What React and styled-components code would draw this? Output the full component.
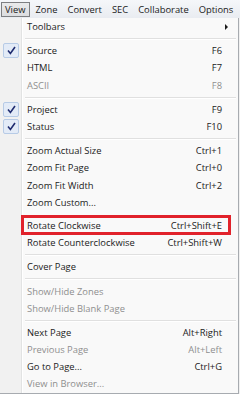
import React from 'react';
import styled, { createGlobalStyle } from 'styled-components';

const GlobalStyle = createGlobalStyle`
  html, body {
    margin: 0;
    padding: 0;
    background: #ffffff;
  }
  body {
    font-family: "Open Sans", "Noto Sans", sans-serif;
    font-size: 9.4px;
    color: #1b1b1b;
    width: 240px;
    height: 394px;
    overflow: hidden;
  }
`;

const menuTitles = ['View', 'Zone', 'Convert', 'SEC', 'Collaborate', 'Options'];

// one entry per menu row; sep marks a divider line
const items = [
  { label: 'Toolbars', submenu: true },
  { sep: true },
  { label: 'Source', shortcut: 'F6', checked: true },
  { label: 'HTML', shortcut: 'F7' },
  { label: 'ASCII', shortcut: 'F8', disabled: true },
  { sep: true },
  { label: 'Project', shortcut: 'F9', checked: true },
  { label: 'Status', shortcut: 'F10', checked: true },
  { sep: true },
  { label: 'Zoom Actual Size', shortcut: 'Ctrl+1' },
  { label: 'Zoom Fit Page', shortcut: 'Ctrl+0' },
  { label: 'Zoom Fit Width', shortcut: 'Ctrl+2' },
  { label: 'Zoom Custom...' },
  { label: 'Rotate Clockwise', shortcut: 'Ctrl+Shift+E', marked: true },
  { label: 'Rotate Counterclockwise', shortcut: 'Ctrl+Shift+W' },
  { sep: true },
  { label: 'Cover Page' },
  { sep: true },
  { label: 'Show/Hide Zones', disabled: true },
  { label: 'Show/Hide Blank Page', disabled: true },
  { sep: true },
  { label: 'Next Page', shortcut: 'Alt+Right' },
  { label: 'Previous Page', shortcut: 'Alt+Left', disabled: true },
  { label: 'Go to Page...', shortcut: 'Ctrl+G' },
  { label: 'View in Browser...', disabled: true },
];

const CheckIcon = () => (
  <svg width="9" height="9" viewBox="0 0 9 9">
    <path d="M1 4.6 L3.4 7.4 L8 1" fill="none" stroke="#1f2c70" strokeWidth="1.6" />
  </svg>
);

export default function App() {
  return (
    <>
      <GlobalStyle />
      <Page>
        <MenuBar>
          {menuTitles.map((t, i) => (
            <MenuTitle key={t} $open={i === 0}>{t}</MenuTitle>
          ))}
        </MenuBar>
        <Dropdown>
          {items.map((it, i) =>
            it.sep ? (
              <Separator key={i} />
            ) : (
              <Item key={i} $disabled={it.disabled} $marked={it.marked}>
                <Gutter>
                  {it.checked && (
                    <CheckBox>
                      <CheckIcon />
                    </CheckBox>
                  )}
                </Gutter>
                <Label>{it.label}</Label>
                {it.shortcut && <Shortcut>{it.shortcut}</Shortcut>}
                {it.submenu && <Arrow />}
              </Item>
            )
          )}
        </Dropdown>
      </Page>
    </>
  );
}

const Page = styled.div`
  width: 240px;
  height: 394px;
  display: flex;
  flex-direction: column;
  background: #f0f0f0;
`;

const MenuBar = styled.div`
  height: 18px;
  display: flex;
  align-items: center;
  background: linear-gradient(#f5f7fa, #e9ecf1);
  box-sizing: border-box;
  padding-left: 1px;
  white-space: nowrap;
  overflow: hidden;
`;

const MenuTitle = styled.div`
  height: 15px;
  line-height: 13px;
  padding: 0 3px;
  margin-right: 2px;
  box-sizing: border-box;
  border: 1px solid ${(p) => (p.$open ? '#7d7f82' : 'transparent')};
  background: ${(p) => (p.$open ? 'linear-gradient(#e9eaeb, #dcdddf)' : 'transparent')};
  color: #1b1b1b;
  font-size: 9.4px;
`;

const Dropdown = styled.div`
  flex: 1;
  width: 239px;
  box-sizing: border-box;
  border-right: 1px solid #a7abb0;
  border-bottom: 1px solid #a7abb0;
  background: linear-gradient(to right, #f1f1f1 0, #f1f1f1 21px, #e2e3e3 21px, #e2e3e3 22px, #ffffff 22px, #ffffff 23px, #f9f9f9 23px);
  display: flex;
  flex-direction: column;
`;

const Item = styled.div`
  position: relative;
  height: 17.2px;
  flex-shrink: 0;
  display: flex;
  align-items: center;
  padding-right: 16px;
  color: ${(p) => (p.$disabled ? '#8f8f8f' : '#1b1b1b')};
  margin-top: ${(p) => (p.$marked ? '6px' : '0')};
  &::after {
    content: '';
    display: ${(p) => (p.$marked ? 'block' : 'none')};
    position: absolute;
    left: 21px;
    right: 7px;
    top: -2px;
    bottom: -1px;
    border: 3px solid #e1222b;
  }
`;

const Gutter = styled.div`
  width: 27px;
  flex-shrink: 0;
  display: flex;
  align-items: center;
  padding-left: 3px;
  box-sizing: border-box;
`;

const CheckBox = styled.div`
  width: 16px;
  height: 15px;
  box-sizing: border-box;
  border: 1px solid #b7cbe6;
  background: #e3ebf7;
  border-radius: 2px;
  display: flex;
  align-items: center;
  justify-content: center;
`;

const Label = styled.span`
  flex: 1;
  white-space: nowrap;
`;

const Shortcut = styled.span`
  white-space: nowrap;
`;

const Arrow = styled.span`
  position: absolute;
  right: 10px;
  top: 6px;
  width: 0;
  height: 0;
  border-top: 3px solid transparent;
  border-bottom: 3px solid transparent;
  border-left: 3px solid #1b1b1b;
`;

const Separator = styled.div`
  height: 7px;
  flex-shrink: 0;
  margin-left: 25px;
  margin-right: 2px;
  background: linear-gradient(transparent 3px, #e0e0e0 3px, #e0e0e0 4px, #ffffff 4px, #ffffff 5px, transparent 5px);
`;
